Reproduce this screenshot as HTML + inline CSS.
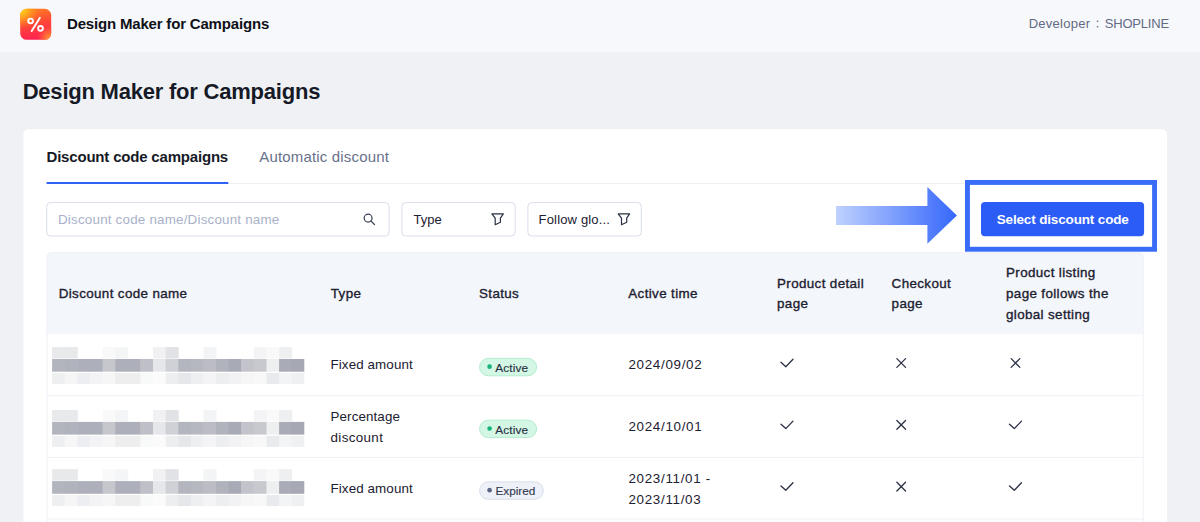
<!DOCTYPE html>
<html lang="en">
<head>
<meta charset="utf-8">
<title>Design Maker for Campaigns</title>
<style>
*{box-sizing:border-box;margin:0;padding:0}
html,body{width:1200px;height:522px;overflow:hidden}
body{position:relative;background:#f0f1f5;font-family:"Liberation Sans","Noto Sans CJK SC",sans-serif;color:#1c2030}
#bg{position:absolute;left:0;top:0;display:block}
.abs{position:absolute;white-space:nowrap}
#apptitle{left:67px;top:15.4px;font-size:15px;line-height:18px;font-weight:700;color:#0f1118;letter-spacing:-0.18px}
#colon{display:inline-block;width:14.4px;text-align:center;font-size:10.5px;letter-spacing:0;position:relative;top:-0.3px}
#dev{left:1028.7px;top:16.4px;font-size:13px;line-height:16px;color:#626a84;font-family:"Liberation Sans","Noto Sans CJK TC",sans-serif}
#pagetitle{left:22.7px;top:78.3px;font-size:22px;line-height:28px;font-weight:700;color:#161a26;letter-spacing:-0.22px}
#tab1{left:46.5px;top:148.3px;font-size:15px;line-height:18px;font-weight:700;color:#161a26;letter-spacing:-0.19px}
#tab2{left:259.3px;top:148.3px;font-size:15px;line-height:18px;color:#68718b;letter-spacing:0.17px}
.boxtxt{font-size:13px;line-height:16px;top:211.6px;color:#1c2030}
#btntxt{left:996.7px;top:212.4px;font-size:13.5px;line-height:16px;font-weight:700;color:#fff;letter-spacing:-0.15px}
.th{font-size:13.4px;line-height:20.8px;font-weight:400;color:#1c2030;letter-spacing:0.37px;-webkit-text-stroke:0.35px #1c2030}
.td{font-size:13.4px;line-height:20.6px;color:#1c2030;letter-spacing:0.1px}
.dt{letter-spacing:0.7px}
.pt{font-size:11.8px;line-height:16px;letter-spacing:0.16px;-webkit-text-stroke:0.15px}
</style>
</head>
<body>
<svg id="bg" width="1200" height="522" viewBox="0 0 1200 522">
<defs>
<linearGradient id="lg1" x1="0.35" y1="0" x2="0.55" y2="1"><stop offset="0" stop-color="#ff7f22"/><stop offset="0.45" stop-color="#ff4a35"/><stop offset="1" stop-color="#ff1f55"/></linearGradient>
<radialGradient id="lg2" cx="0.02" cy="0.02" r="0.62"><stop offset="0" stop-color="#ffe21c"/><stop offset="0.45" stop-color="#ffae1c" stop-opacity="0.75"/><stop offset="1" stop-color="#ff8a1c" stop-opacity="0"/></radialGradient>
<radialGradient id="lg3" cx="0.98" cy="0.98" r="0.45"><stop offset="0" stop-color="#ffb02a"/><stop offset="0.5" stop-color="#ff8a2c" stop-opacity="0.6"/><stop offset="1" stop-color="#ff6a2c" stop-opacity="0"/></radialGradient>
<linearGradient id="ag" x1="0" y1="0" x2="1" y2="0"><stop offset="0" stop-color="#bfd1fe"/><stop offset="1" stop-color="#3567fb"/></linearGradient>
<clipPath id="tclip"><rect x="46.6" y="252.4" width="1097.1" height="300" rx="4.5"/></clipPath>
</defs>
<rect x="0" y="0" width="1200" height="52.4" fill="#f7f8fb"/>
<g transform="translate(20.2 8.8)"><rect width="31" height="31" rx="6.5" fill="url(#lg1)"/><rect width="31" height="31" rx="6.5" fill="url(#lg2)"/><rect width="31" height="31" rx="6.5" fill="url(#lg3)"/><g fill="none" stroke="#fff" stroke-width="1.9" stroke-linecap="round"><circle cx="10.4" cy="12.2" r="2.35"/><circle cx="20.3" cy="19.6" r="2.35"/><line x1="19.7" y1="9" x2="11.5" y2="22.2"/></g></g>
<rect x="23.4" y="129.2" width="1143.7" height="420" rx="5" fill="#fff"/>
<rect x="46.5" y="183" width="1097.2" height="1" fill="#eef0f5"/>
<rect x="46.6" y="182" width="181.7" height="2" fill="#2f63f6"/>
<rect x="46.70" y="202.60" width="342.40" height="33.40" rx="3.8" fill="#fff" stroke="#d9deec" stroke-width="1"/>
<rect x="401.90" y="202.60" width="113.30" height="33.40" rx="3.8" fill="#fff" stroke="#d9deec" stroke-width="1"/>
<rect x="527.90" y="202.60" width="113.40" height="33.40" rx="3.8" fill="#fff" stroke="#d9deec" stroke-width="1"/>
<g transform="translate(362 212)" fill="none" stroke="#3a4055" stroke-width="1.2" stroke-linecap="round"><circle cx="6.1" cy="6.1" r="3.95"/><line x1="9.1" y1="9.1" x2="12.5" y2="12.5"/></g>
<path transform="translate(491 213)" d="M0.9 0.9 H12.3 L9.4 5.2 V9.3 L4.2 11.7 V5.2 Z" fill="none" stroke="#2a3042" stroke-width="1.2" stroke-linejoin="round"/>
<path transform="translate(617.3 213)" d="M0.9 0.9 H12.3 L9.4 5.2 V9.3 L4.2 11.7 V5.2 Z" fill="none" stroke="#2a3042" stroke-width="1.2" stroke-linejoin="round"/>
<path transform="translate(835 186)" d="M1 20 H92.4 V1.1 L121.9 29.4 L92.4 57.8 V38.9 H1 Z" fill="url(#ag)"/>
<g clip-path="url(#tclip)"><rect x="46" y="252" width="1099" height="300" fill="#fff"/><rect x="46" y="252" width="1099" height="82" fill="#f3f6fa"/>
<rect x="46" y="395.2" width="1099" height="1" fill="#eef0f6"/>
<rect x="46" y="456.9" width="1099" height="1" fill="#eef0f6"/>
<rect x="46" y="518.6" width="1099" height="1" fill="#eef0f6"/>
</g>
<rect x="47.1" y="252.9" width="1096.1" height="300" rx="4" fill="none" stroke="#eff1f7" stroke-width="1"/>
<rect x="967.45" y="182.45" width="187.1" height="66.8" fill="#fff" stroke="#396cf9" stroke-width="4.9"/>
<rect x="981" y="202" width="163.1" height="34.3" rx="4" fill="#2c5cf6"/>
<rect x="479.60" y="358.40" width="57.00" height="17.40" rx="8.70" fill="#d4f6e4" stroke="#b3ecce" stroke-width="1"/><circle cx="489.60" cy="366.65" r="2.3" fill="#16b47c"/>
<rect x="479.60" y="420.20" width="57.00" height="17.40" rx="8.70" fill="#d4f6e4" stroke="#b3ecce" stroke-width="1"/><circle cx="489.60" cy="428.45" r="2.3" fill="#16b47c"/>
<rect x="479.60" y="481.90" width="63.70" height="17.40" rx="8.70" fill="#eef1f8" stroke="#d7ddec" stroke-width="1"/><circle cx="489.60" cy="490.15" r="2.3" fill="#5b6686"/>
<g transform="translate(52.1 347.1)"><rect x="0.00" y="0.00" width="13.11" height="11.40" fill="#e8e9eb"/><rect x="12.61" y="0.00" width="13.11" height="11.40" fill="#e8e9eb"/><rect x="50.44" y="0.00" width="13.11" height="11.40" fill="#f9f9fa"/><rect x="63.05" y="0.00" width="13.11" height="11.40" fill="#f4f5f6"/><rect x="100.88" y="0.00" width="13.11" height="11.40" fill="#f1f1f3"/><rect x="113.49" y="0.00" width="13.11" height="11.40" fill="#e1e2e5"/><rect x="151.32" y="0.00" width="13.11" height="11.40" fill="#f3f4f5"/><rect x="201.76" y="0.00" width="13.11" height="11.40" fill="#f4f4f6"/><rect x="214.37" y="0.00" width="13.11" height="11.40" fill="#f9f9fa"/><rect x="226.98" y="0.00" width="13.11" height="11.40" fill="#edeff1"/><rect x="0.00" y="11.90" width="13.11" height="12.70" fill="#b3b5be"/><rect x="12.61" y="11.90" width="13.11" height="12.70" fill="#b0b2bc"/><rect x="25.22" y="11.90" width="13.11" height="12.70" fill="#adb0ba"/><rect x="37.83" y="11.90" width="13.11" height="12.70" fill="#adb0ba"/><rect x="50.44" y="11.90" width="13.11" height="12.70" fill="#c6c7cd"/><rect x="63.05" y="11.90" width="13.11" height="12.70" fill="#adb0ba"/><rect x="75.66" y="11.90" width="13.11" height="12.70" fill="#adb0ba"/><rect x="88.27" y="11.90" width="13.11" height="12.70" fill="#bfc0c7"/><rect x="100.88" y="11.90" width="13.11" height="12.70" fill="#e6e7ea"/><rect x="113.49" y="11.90" width="13.11" height="12.70" fill="#d0d1d6"/><rect x="126.10" y="11.90" width="13.11" height="12.70" fill="#b4b6bf"/><rect x="138.71" y="11.90" width="13.11" height="12.70" fill="#b6b8c0"/><rect x="151.32" y="11.90" width="13.11" height="12.70" fill="#bbbcc4"/><rect x="163.93" y="11.90" width="13.11" height="12.70" fill="#b0b2bc"/><rect x="176.54" y="11.90" width="13.11" height="12.70" fill="#a8aab5"/><rect x="189.15" y="11.90" width="13.11" height="12.70" fill="#c3c4cb"/><rect x="201.76" y="11.90" width="13.11" height="12.70" fill="#c8c9cf"/><rect x="214.37" y="11.90" width="13.11" height="12.70" fill="#eeeff1"/><rect x="226.98" y="11.90" width="13.11" height="12.70" fill="#a9acb6"/><rect x="239.59" y="11.90" width="12.61" height="12.70" fill="#a6a8b3"/><rect x="0.00" y="25.80" width="13.11" height="11.10" fill="#eeeff1"/><rect x="12.61" y="25.80" width="13.11" height="11.10" fill="#f6f6f7"/><rect x="25.22" y="25.80" width="13.11" height="11.10" fill="#eceef1"/><rect x="37.83" y="25.80" width="13.11" height="11.10" fill="#f3f3f5"/><rect x="50.44" y="25.80" width="13.11" height="11.10" fill="#f6f6f7"/><rect x="63.05" y="25.80" width="13.11" height="11.10" fill="#eeeeef"/><rect x="75.66" y="25.80" width="13.11" height="11.10" fill="#eeeeef"/><rect x="88.27" y="25.80" width="13.11" height="11.10" fill="#f8f9f9"/><rect x="100.88" y="25.80" width="13.11" height="11.10" fill="#fbfbfb"/><rect x="113.49" y="25.80" width="13.11" height="11.10" fill="#edeef0"/><rect x="126.10" y="25.80" width="13.11" height="11.10" fill="#e6e7ea"/><rect x="138.71" y="25.80" width="13.11" height="11.10" fill="#eeeff1"/><rect x="151.32" y="25.80" width="13.11" height="11.10" fill="#f4f4f6"/><rect x="163.93" y="25.80" width="13.11" height="11.10" fill="#eceef0"/><rect x="176.54" y="25.80" width="13.11" height="11.10" fill="#f2f2f4"/><rect x="189.15" y="25.80" width="13.11" height="11.10" fill="#f6f6f7"/><rect x="201.76" y="25.80" width="13.11" height="11.10" fill="#f8f8f8"/><rect x="214.37" y="25.80" width="13.11" height="11.10" fill="#e9eaed"/><rect x="226.98" y="25.80" width="13.11" height="11.10" fill="#f3f4f5"/><rect x="239.59" y="25.80" width="12.61" height="11.10" fill="#eff0f2"/></g>
<g transform="translate(52.1 410.0)"><rect x="0.00" y="0.00" width="13.11" height="11.40" fill="#e8e9eb"/><rect x="12.61" y="0.00" width="13.11" height="11.40" fill="#e8e9eb"/><rect x="50.44" y="0.00" width="13.11" height="11.40" fill="#f9f9fa"/><rect x="63.05" y="0.00" width="13.11" height="11.40" fill="#f4f5f6"/><rect x="100.88" y="0.00" width="13.11" height="11.40" fill="#f1f1f3"/><rect x="113.49" y="0.00" width="13.11" height="11.40" fill="#e1e2e5"/><rect x="151.32" y="0.00" width="13.11" height="11.40" fill="#f3f4f5"/><rect x="201.76" y="0.00" width="13.11" height="11.40" fill="#f4f4f6"/><rect x="214.37" y="0.00" width="13.11" height="11.40" fill="#f9f9fa"/><rect x="226.98" y="0.00" width="13.11" height="11.40" fill="#edeff1"/><rect x="0.00" y="11.90" width="13.11" height="12.70" fill="#b3b5be"/><rect x="12.61" y="11.90" width="13.11" height="12.70" fill="#b0b2bc"/><rect x="25.22" y="11.90" width="13.11" height="12.70" fill="#adb0ba"/><rect x="37.83" y="11.90" width="13.11" height="12.70" fill="#adb0ba"/><rect x="50.44" y="11.90" width="13.11" height="12.70" fill="#c6c7cd"/><rect x="63.05" y="11.90" width="13.11" height="12.70" fill="#adb0ba"/><rect x="75.66" y="11.90" width="13.11" height="12.70" fill="#adb0ba"/><rect x="88.27" y="11.90" width="13.11" height="12.70" fill="#bfc0c7"/><rect x="100.88" y="11.90" width="13.11" height="12.70" fill="#e6e7ea"/><rect x="113.49" y="11.90" width="13.11" height="12.70" fill="#d0d1d6"/><rect x="126.10" y="11.90" width="13.11" height="12.70" fill="#b4b6bf"/><rect x="138.71" y="11.90" width="13.11" height="12.70" fill="#b6b8c0"/><rect x="151.32" y="11.90" width="13.11" height="12.70" fill="#bbbcc4"/><rect x="163.93" y="11.90" width="13.11" height="12.70" fill="#b0b2bc"/><rect x="176.54" y="11.90" width="13.11" height="12.70" fill="#a8aab5"/><rect x="189.15" y="11.90" width="13.11" height="12.70" fill="#c3c4cb"/><rect x="201.76" y="11.90" width="13.11" height="12.70" fill="#c8c9cf"/><rect x="214.37" y="11.90" width="13.11" height="12.70" fill="#eeeff1"/><rect x="226.98" y="11.90" width="13.11" height="12.70" fill="#a9acb6"/><rect x="239.59" y="11.90" width="12.61" height="12.70" fill="#a6a8b3"/><rect x="0.00" y="25.80" width="13.11" height="11.10" fill="#eeeff1"/><rect x="12.61" y="25.80" width="13.11" height="11.10" fill="#f6f6f7"/><rect x="25.22" y="25.80" width="13.11" height="11.10" fill="#eceef1"/><rect x="37.83" y="25.80" width="13.11" height="11.10" fill="#f3f3f5"/><rect x="50.44" y="25.80" width="13.11" height="11.10" fill="#f6f6f7"/><rect x="63.05" y="25.80" width="13.11" height="11.10" fill="#eeeeef"/><rect x="75.66" y="25.80" width="13.11" height="11.10" fill="#eeeeef"/><rect x="88.27" y="25.80" width="13.11" height="11.10" fill="#f8f9f9"/><rect x="100.88" y="25.80" width="13.11" height="11.10" fill="#fbfbfb"/><rect x="113.49" y="25.80" width="13.11" height="11.10" fill="#edeef0"/><rect x="126.10" y="25.80" width="13.11" height="11.10" fill="#e6e7ea"/><rect x="138.71" y="25.80" width="13.11" height="11.10" fill="#eeeff1"/><rect x="151.32" y="25.80" width="13.11" height="11.10" fill="#f4f4f6"/><rect x="163.93" y="25.80" width="13.11" height="11.10" fill="#eceef0"/><rect x="176.54" y="25.80" width="13.11" height="11.10" fill="#f2f2f4"/><rect x="189.15" y="25.80" width="13.11" height="11.10" fill="#f6f6f7"/><rect x="201.76" y="25.80" width="13.11" height="11.10" fill="#f8f8f8"/><rect x="214.37" y="25.80" width="13.11" height="11.10" fill="#e9eaed"/><rect x="226.98" y="25.80" width="13.11" height="11.10" fill="#f3f4f5"/><rect x="239.59" y="25.80" width="12.61" height="11.10" fill="#eff0f2"/></g>
<g transform="translate(52.1 469.2)"><rect x="0.00" y="0.00" width="13.11" height="11.40" fill="#e8e9eb"/><rect x="12.61" y="0.00" width="13.11" height="11.40" fill="#e8e9eb"/><rect x="50.44" y="0.00" width="13.11" height="11.40" fill="#f9f9fa"/><rect x="63.05" y="0.00" width="13.11" height="11.40" fill="#f4f5f6"/><rect x="100.88" y="0.00" width="13.11" height="11.40" fill="#f1f1f3"/><rect x="113.49" y="0.00" width="13.11" height="11.40" fill="#e1e2e5"/><rect x="151.32" y="0.00" width="13.11" height="11.40" fill="#f3f4f5"/><rect x="201.76" y="0.00" width="13.11" height="11.40" fill="#f4f4f6"/><rect x="214.37" y="0.00" width="13.11" height="11.40" fill="#f9f9fa"/><rect x="226.98" y="0.00" width="13.11" height="11.40" fill="#edeff1"/><rect x="0.00" y="11.90" width="13.11" height="12.70" fill="#b3b5be"/><rect x="12.61" y="11.90" width="13.11" height="12.70" fill="#b0b2bc"/><rect x="25.22" y="11.90" width="13.11" height="12.70" fill="#adb0ba"/><rect x="37.83" y="11.90" width="13.11" height="12.70" fill="#adb0ba"/><rect x="50.44" y="11.90" width="13.11" height="12.70" fill="#c6c7cd"/><rect x="63.05" y="11.90" width="13.11" height="12.70" fill="#adb0ba"/><rect x="75.66" y="11.90" width="13.11" height="12.70" fill="#adb0ba"/><rect x="88.27" y="11.90" width="13.11" height="12.70" fill="#bfc0c7"/><rect x="100.88" y="11.90" width="13.11" height="12.70" fill="#e6e7ea"/><rect x="113.49" y="11.90" width="13.11" height="12.70" fill="#d0d1d6"/><rect x="126.10" y="11.90" width="13.11" height="12.70" fill="#b4b6bf"/><rect x="138.71" y="11.90" width="13.11" height="12.70" fill="#b6b8c0"/><rect x="151.32" y="11.90" width="13.11" height="12.70" fill="#bbbcc4"/><rect x="163.93" y="11.90" width="13.11" height="12.70" fill="#b0b2bc"/><rect x="176.54" y="11.90" width="13.11" height="12.70" fill="#a8aab5"/><rect x="189.15" y="11.90" width="13.11" height="12.70" fill="#c3c4cb"/><rect x="201.76" y="11.90" width="13.11" height="12.70" fill="#c8c9cf"/><rect x="214.37" y="11.90" width="13.11" height="12.70" fill="#eeeff1"/><rect x="226.98" y="11.90" width="13.11" height="12.70" fill="#a9acb6"/><rect x="239.59" y="11.90" width="12.61" height="12.70" fill="#a6a8b3"/><rect x="0.00" y="25.80" width="13.11" height="11.10" fill="#eeeff1"/><rect x="12.61" y="25.80" width="13.11" height="11.10" fill="#f6f6f7"/><rect x="25.22" y="25.80" width="13.11" height="11.10" fill="#eceef1"/><rect x="37.83" y="25.80" width="13.11" height="11.10" fill="#f3f3f5"/><rect x="50.44" y="25.80" width="13.11" height="11.10" fill="#f6f6f7"/><rect x="63.05" y="25.80" width="13.11" height="11.10" fill="#eeeeef"/><rect x="75.66" y="25.80" width="13.11" height="11.10" fill="#eeeeef"/><rect x="88.27" y="25.80" width="13.11" height="11.10" fill="#f8f9f9"/><rect x="100.88" y="25.80" width="13.11" height="11.10" fill="#fbfbfb"/><rect x="113.49" y="25.80" width="13.11" height="11.10" fill="#edeef0"/><rect x="126.10" y="25.80" width="13.11" height="11.10" fill="#e6e7ea"/><rect x="138.71" y="25.80" width="13.11" height="11.10" fill="#eeeff1"/><rect x="151.32" y="25.80" width="13.11" height="11.10" fill="#f4f4f6"/><rect x="163.93" y="25.80" width="13.11" height="11.10" fill="#eceef0"/><rect x="176.54" y="25.80" width="13.11" height="11.10" fill="#f2f2f4"/><rect x="189.15" y="25.80" width="13.11" height="11.10" fill="#f6f6f7"/><rect x="201.76" y="25.80" width="13.11" height="11.10" fill="#f8f8f8"/><rect x="214.37" y="25.80" width="13.11" height="11.10" fill="#e9eaed"/><rect x="226.98" y="25.80" width="13.11" height="11.10" fill="#f3f4f5"/><rect x="239.59" y="25.80" width="12.61" height="11.10" fill="#eff0f2"/></g>
<path transform="translate(787.0 363.0)" d="M-6.0 -0.7 L-1.2 3.7 L6.0 -3.8" fill="none" stroke="#2b3144" stroke-width="1.3" stroke-linecap="round" stroke-linejoin="round"/>
<path transform="translate(901.2 363.0)" d="M-4.35 -4.35 L4.35 4.35 M4.35 -4.35 L-4.35 4.35" fill="none" stroke="#2b3144" stroke-width="1.3" stroke-linecap="round"/>
<path transform="translate(1015.5 363.0)" d="M-4.35 -4.35 L4.35 4.35 M4.35 -4.35 L-4.35 4.35" fill="none" stroke="#2b3144" stroke-width="1.3" stroke-linecap="round"/>
<path transform="translate(787.0 424.9)" d="M-6.0 -0.7 L-1.2 3.7 L6.0 -3.8" fill="none" stroke="#2b3144" stroke-width="1.3" stroke-linecap="round" stroke-linejoin="round"/>
<path transform="translate(901.2 424.9)" d="M-4.35 -4.35 L4.35 4.35 M4.35 -4.35 L-4.35 4.35" fill="none" stroke="#2b3144" stroke-width="1.3" stroke-linecap="round"/>
<path transform="translate(1015.5 424.9)" d="M-6.0 -0.7 L-1.2 3.7 L6.0 -3.8" fill="none" stroke="#2b3144" stroke-width="1.3" stroke-linecap="round" stroke-linejoin="round"/>
<path transform="translate(787.0 486.6)" d="M-6.0 -0.7 L-1.2 3.7 L6.0 -3.8" fill="none" stroke="#2b3144" stroke-width="1.3" stroke-linecap="round" stroke-linejoin="round"/>
<path transform="translate(901.2 486.6)" d="M-4.35 -4.35 L4.35 4.35 M4.35 -4.35 L-4.35 4.35" fill="none" stroke="#2b3144" stroke-width="1.3" stroke-linecap="round"/>
<path transform="translate(1015.5 486.6)" d="M-6.0 -0.7 L-1.2 3.7 L6.0 -3.8" fill="none" stroke="#2b3144" stroke-width="1.3" stroke-linecap="round" stroke-linejoin="round"/>
</svg>
<div class="abs" id="apptitle">Design Maker for Campaigns</div>
<div class="abs" id="dev"><span style="letter-spacing:0.27px">Developer</span><span id="colon">：</span><span style="letter-spacing:-0.2px">SHOPLINE</span></div>
<div class="abs" id="pagetitle">Design Maker for Campaigns</div>
<div class="abs" id="tab1">Discount code campaigns</div>
<div class="abs" id="tab2">Automatic discount</div>
<div class="abs boxtxt" style="left:58px;top:211.5px;color:#a9b1c9;font-size:13.4px;letter-spacing:0.2px">Discount code name/Discount name</div>
<div class="abs boxtxt" style="left:413.6px">Type</div>
<div class="abs boxtxt" style="left:538.6px;letter-spacing:0.16px">Follow glo...</div>
<div class="abs" id="btntxt">Select discount code</div>
<div class="abs th" style="left:58.7px;top:283.5px">Discount code name</div>
<div class="abs th" style="left:330.8px;top:283.5px">Type</div>
<div class="abs th" style="left:479px;top:283.5px">Status</div>
<div class="abs th" style="left:628.3px;top:283.5px">Active time</div>
<div class="abs th" style="left:777px;top:273.7px;line-height:20px">Product detail<br>page</div>
<div class="abs th" style="left:891.6px;top:273.7px;line-height:20px">Checkout<br>page</div>
<div class="abs th" style="left:1006px;top:262.3px;line-height:21px">Product listing<br>page follows the<br>global setting</div>
<div class="abs td" style="left:330.5px;top:355.1px">Fixed amount</div>
<div class="abs td" style="left:330.5px;top:406px;line-height:21px">Percentage<br><span style="letter-spacing:0.36px">discount</span></div>
<div class="abs td" style="left:330.5px;top:479px">Fixed amount</div>
<div class="abs pt" style="left:495.2px;top:360px;color:#2a2f45">Active</div>
<div class="abs pt" style="left:495.2px;top:421.6px;color:#2a2f45">Active</div>
<div class="abs pt" style="left:495.5px;top:483px;color:#333a52;letter-spacing:-0.04px">Expired</div>
<div class="abs td dt" style="left:628.4px;top:355.1px">2024/09/02</div>
<div class="abs td dt" style="left:628.4px;top:417px">2024/10/01</div>
<div class="abs td dt" style="left:628.4px;top:468px;line-height:21px">2023/11/01 -<br>2023/11/03</div>
</body>
</html>
